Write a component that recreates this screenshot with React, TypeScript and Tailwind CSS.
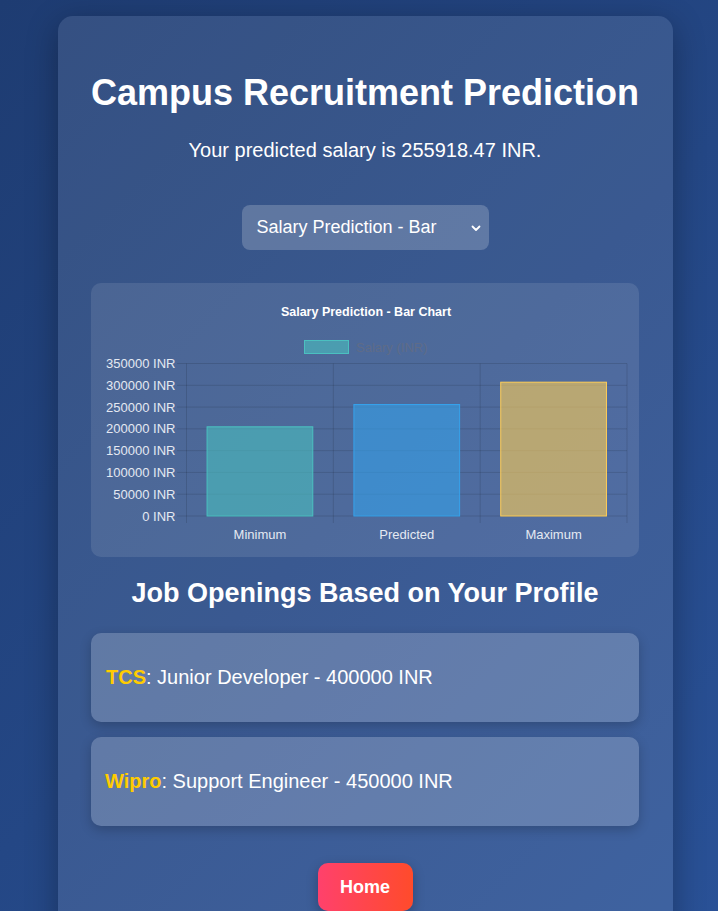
import React from "react";

const F = { fontFamily: '"Liberation Sans", Arial, Helvetica, sans-serif' };

function Chart() {
  const base = 233;
  const top = 80.5;
  const h = base - top;
  const left = 95.5;
  const right = 536;
  const colW = (right - left) / 3;
  const ticks = [0, 50000, 100000, 150000, 200000, 250000, 300000, 350000];
  const bars = [
    { label: "Minimum", v: 204734.78, c: "rgb(75,192,192)" },
    { label: "Predicted", v: 255918.47, c: "rgb(54,162,235)" },
    { label: "Maximum", v: 307102.16, c: "rgb(255,206,86)" },
  ];
  const bw = colW * 0.72;
  return (
    <svg width="548" height="274" viewBox="0 0 548 274" style={F}>
      <text x="275" y="33" textAnchor="middle" fontSize="12.5" fontWeight="700" fill="#ffffff">
        Salary Prediction - Bar Chart
      </text>
      <rect x="213.5" y="57.5" width="44" height="13" fill="rgb(75,192,192)" fillOpacity="0.6" stroke="rgb(75,192,192)" strokeWidth="1" />
      <text x="265" y="69" fontSize="13" fill="#5f6c88">Salary (INR)</text>
      {ticks.map((t) => {
        const y = base - (t / 350000) * h;
        return (
          <g key={t}>
            <line x1="86" x2={right} y1={y} y2={y} stroke="rgba(0,0,0,0.12)" strokeWidth="1" />
            <text x="84.5" y={y + 4.5} textAnchor="end" fontSize="13" fill="#e4e9f2">
              {t} INR
            </text>
          </g>
        );
      })}
      {[0, 1, 2, 3].map((i) => {
        const x = left + i * colW;
        return <line key={i} x1={x} x2={x} y1={top} y2={240} stroke="rgba(0,0,0,0.12)" strokeWidth="1" />;
      })}
      {bars.map((b, i) => {
        const cx = left + colW * (i + 0.5);
        const bh = (b.v / 350000) * h;
        return (
          <g key={b.label}>
            <rect x={cx - bw / 2} y={base - bh} width={bw} height={bh} fill={b.c} fillOpacity="0.6" stroke={b.c} strokeWidth="1" />
            <text x={cx} y="255.5" textAnchor="middle" fontSize="13" fill="#e4e9f2">
              {b.label}
            </text>
          </g>
        );
      })}
    </svg>
  );
}

export default function App() {
  return (
    <div
      className="min-h-screen w-full bg-[linear-gradient(135deg,#1e3c72,#2a5298)] pt-[16px] pb-[40px]"
      style={F}
    >
      <div className="ml-[58px] w-[615px] rounded-[15px] bg-white/10 shadow-[0_8px_32px_rgba(0,0,0,0.3)] pt-[56px] pb-[40px] pl-[33px] pr-[34px] flex flex-col items-center text-white">
        <h1 className="text-[36px] leading-[42px] font-bold text-center whitespace-nowrap">Campus Recruitment Prediction</h1>
        <p className="mt-[25px] text-[20px] leading-[23px] text-center whitespace-nowrap">Your predicted salary is 255918.47 INR.</p>
        <div className="mt-[43px] w-[247px] h-[45px] rounded-[8px] bg-white/20 flex items-center pl-[15px] pr-[8px] justify-between">
          <span className="text-[18px] leading-[21px]">Salary Prediction - Bar</span>
          <svg width="10" height="8" viewBox="0 0 10 8">
            <path d="M1.5 2.5 L5 6 L8.5 2.5" fill="none" stroke="#ffffff" strokeWidth="1.8" strokeLinecap="round" strokeLinejoin="round" />
          </svg>
        </div>
        <div className="mt-[33px] w-[548px] h-[274px] rounded-[10px] bg-white/10">
          <Chart />
        </div>
        <h2 className="mt-[21px] text-[27px] leading-[31px] font-bold text-center whitespace-nowrap">Job Openings Based on Your Profile</h2>
        <div className="mt-[24px] w-full flex flex-col gap-[15px]">
          <div className="h-[89px] rounded-[10px] bg-white/20 shadow-[0_4px_12px_rgba(0,0,0,0.2)] flex items-center px-[15px]">
            <p className="text-[20px] leading-[23px]">
              <span className="font-bold text-[#ffcc00]">TCS</span>: Junior Developer - 400000 INR
            </p>
          </div>
          <div className="h-[89px] rounded-[10px] bg-white/20 shadow-[0_4px_12px_rgba(0,0,0,0.2)] flex items-center px-[14px]">
            <p className="text-[20px] leading-[23px]">
              <span className="font-bold text-[#ffcc00]">Wipro</span>: Support Engineer - 450000 INR
            </p>
          </div>
        </div>
        <button className="mt-[37px] w-[95px] h-[48px] rounded-[10px] bg-[linear-gradient(90deg,#ff416c,#ff4b2b)] shadow-[0_4px_12px_rgba(0,0,0,0.25)] text-[18px] font-bold text-white">
          Home
        </button>
      </div>
    </div>
  );
}
